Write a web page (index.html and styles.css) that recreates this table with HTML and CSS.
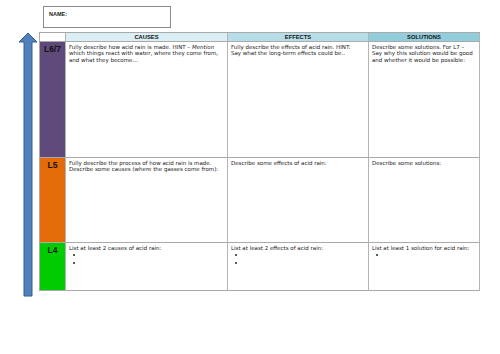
FILE: index.html
```html
<!DOCTYPE html>
<html>
<head>
<meta charset="utf-8">
<link rel="stylesheet" href="styles.css">
</head>
<body>
<div class="name-box">NAME:</div>
<div class="main">
  <svg class="arrow" width="20" height="266" viewBox="0 0 20 266">
    <polygon points="10,1 19,10 14,10 14,264 6,264 6,10 1,10" fill="#4f81bd" stroke="#385d8a" stroke-width="1"/>
  </svg>
  <div class="grid">
    <div class="hd blank"></div>
    <div class="hd c1">CAUSES</div>
    <div class="hd c2">EFFECTS</div>
    <div class="hd c3">SOLUTIONS</div>

    <div class="lvl purple">L6/7</div>
    <div class="cell">Fully describe how acid rain is made. HINT – <i>Mention</i> which things react with water, where they come from, and what they become…</div>
    <div class="cell">Fully describe the effects of acid rain. HINT:<br>Say what the long-term effects could be..</div>
    <div class="cell">Describe some solutions. For L7 – Say why this solution would be good and whether it would be possible:</div>

    <div class="lvl orange">L5</div>
    <div class="cell">Fully describe the process of how acid rain is made. Describe some causes (where the gasses come from):</div>
    <div class="cell">Describe some effects of acid rain:</div>
    <div class="cell">Describe some solutions:</div>

    <div class="lvl green">L4</div>
    <div class="cell">List at least 2 causes of acid rain:<ul><li></li><li></li></ul></div>
    <div class="cell">List at least 2 effects of acid rain:<ul><li></li><li></li></ul></div>
    <div class="cell">List at least 1 solution for acid rain:<ul><li></li></ul></div>
  </div>
</div>
</body>
</html>
```
FILE: styles.css
```css
html, body {
  margin: 0;
  padding: 0;
  background: #fff;
}
body {
  width: 500px;
  height: 354px;
  font-family: "DejaVu Sans", sans-serif;
  color: #222;
}
.name-box {
  margin: 6px 0 0 43px;
  border: 1px solid #8a8a8a;
  font-family: "Liberation Sans", Arial, sans-serif;
  font-weight: bold;
  font-size: 5.5px;
  padding: 4px 0 0 5px;
  box-sizing: border-box;
  width: 128px;
  height: 22px;
}
.main {
  display: flex;
  align-items: flex-start;
  margin-top: 4px;
}
.arrow {
  display: block;
  margin-left: 18px;
}
.grid {
  margin-left: 1px;
  display: grid;
  grid-template-columns: 26px 162px 141px 111px;
  grid-template-rows: 9px 116px 85px 48px;
  border-left: 1px solid #aaa;
  border-top: 1px solid #aaa;
}
.grid > div {
  border-right: 1px solid #b4b4b4;
  border-bottom: 1px solid #aaa;
  box-sizing: border-box;
}
.hd {
  font-family: "Liberation Sans", Arial, sans-serif;
  font-weight: bold;
  font-size: 5.8px;
  text-align: center;
  line-height: 8px;
  color: #111;
}
.blank { background: #fff; }
.c1 { background: #daeef3; }
.c2 { background: #b7dee8; }
.c3 { background: #92cddc; }
.lvl {
  font-family: "Liberation Sans", Arial, sans-serif;
  font-weight: bold;
  font-size: 8.5px;
  text-align: center;
  padding-top: 2px;
  color: #111;
}
.purple { background: #604a7b; }
.orange { background: #e36c09; }
.green { background: #00cc00; }
.cell {
  font-size: 5.5px;
  line-height: 6.8px;
  padding: 1.5px 3px 0 3px;
  color: #222;
}
.cell ul {
  margin: 0;
  padding-left: 15px;
  list-style: disc;
}
.cell li {
  height: 8px;
  font-size: 6px;
  line-height: 8px;
}
```
